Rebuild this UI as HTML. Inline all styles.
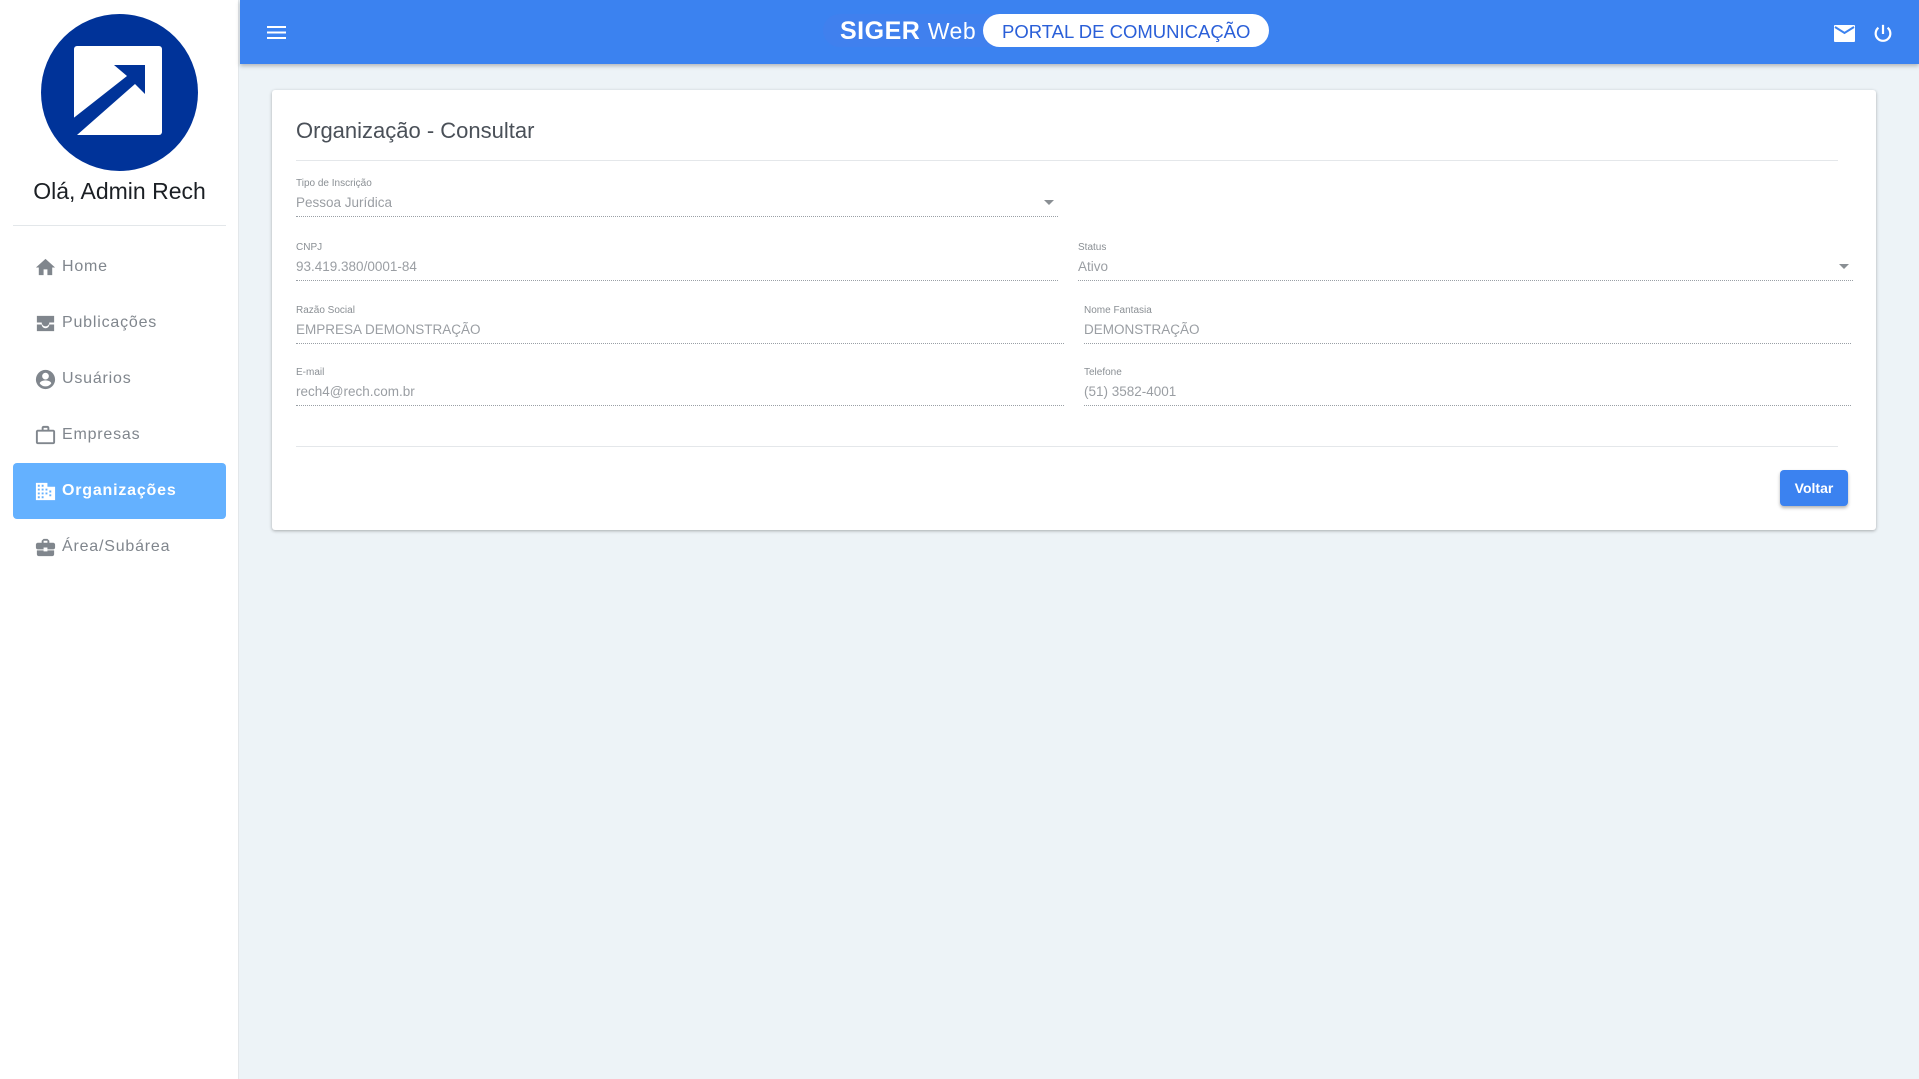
<!DOCTYPE html>
<html><head><meta charset="utf-8">
<style>
*{box-sizing:border-box;margin:0;padding:0}
body{width:1919px;height:1079px;overflow:hidden;background:#edf3f7;font-family:"Liberation Sans",sans-serif;position:relative}
.side{position:absolute;left:0;top:0;width:239px;height:1079px;background:#fff;border-right:1px solid #e3e7ea}
.hdr{position:absolute;left:240px;top:0;right:0;height:64px;background:#3b82f0;box-shadow:0 2px 4px rgba(0,0,0,.25)}
.nav{position:absolute;left:34px;height:22px;display:flex;align-items:center;font-size:16px;color:#80868d;letter-spacing:.8px}
.nav svg{width:23px;height:23px;margin-right:5px;fill:#80868d}
.active{position:absolute;left:13px;top:463px;width:213px;height:56px;background:#64b1ff;border-radius:4px}
.card{position:absolute;left:272px;top:90px;width:1604px;height:440px;background:#fff;border-radius:3px;box-shadow:0 1px 3px rgba(0,0,0,.3)}
.f{position:absolute}
.f .l{position:absolute;top:1px;font-size:10px;color:#8a8f94}
.f .v{position:absolute;top:18px;font-size:13.5px;color:#9a9ea3}
.f .u{position:absolute;top:39px;left:0;right:0;border-top:1px dotted #9aa0a6}
.arrow{position:absolute;right:4px;top:23px;width:0;height:0;border-left:5px solid transparent;border-right:5px solid transparent;border-top:5px solid #8a8f94}
</style></head><body>
<div class="side">
  <svg style="position:absolute;left:41px;top:14px" width="157" height="157" viewBox="0 0 157 157">
    <circle cx="78.5" cy="78.5" r="78.5" fill="#003399"/>
    <rect x="33" y="32" width="88" height="89" rx="3" fill="#fff"/>
    <polygon points="30,106 86,62 73,51 104,51 104,80 94,70 36,121 30,121" fill="#003399"/>
  </svg>
  <div style="position:absolute;left:0;width:239px;top:178px;text-align:center;font-size:23px;color:#1b1f24">Olá, Admin Rech</div>
  <div style="position:absolute;left:13px;width:213px;top:225px;border-top:1px solid #e3e7ea"></div>
  <div class="active"></div>
  <div class="nav" style="top:256px"><svg viewBox="0 0 24 24"><path d="M10 20v-6h4v6h5v-8h3L12 3 2 12h3v8z"/></svg>Home</div>
  <div class="nav" style="top:312px"><svg viewBox="0 0 24 24"><path d="M3 4h18v7h-5a4 4 0 0 1-8 0H3zM3 13h5a4 4 0 0 0 8 0h5v7H3z"/></svg>Publicações</div>
  <div class="nav" style="top:368px"><svg viewBox="0 0 24 24"><path d="M12 2a10 10 0 1 0 0 20 10 10 0 0 0 0-20zm0 3a3.5 3.5 0 1 1 0 7 3.5 3.5 0 0 1 0-7zm0 14.2a7.2 7.2 0 0 1-6-3.2c0-2 4-3.1 6-3.1s6 1.1 6 3.1a7.2 7.2 0 0 1-6 3.2z"/></svg>Usuários</div>
  <div class="nav" style="top:424px"><svg viewBox="0 0 24 24"><path d="M14 6V4h-4v2zM4 8v11h16V8zm16-2c1.1 0 2 .9 2 2v11c0 1.1-.9 2-2 2H4c-1.1 0-2-.9-2-2V8c0-1.1.9-2 2-2h4V4c0-1.1.9-2 2-2h4c1.1 0 2 .9 2 2v2z"/></svg>Empresas</div>
  <div class="nav" style="top:480px;color:#fff;font-weight:bold"><svg viewBox="0 0 24 24" style="fill:#fff"><path d="M2 3h12v4h8v14H2zm2 2v2h2V5zm4 0v2h2V5zM4 9v2h2V9zm4 0v2h2V9zm4 0v2h2V9zM4 13v2h2v-2zm4 0v2h2v-2zm4 0v2h2v-2zM4 17v2h2v-2zm4 0v2h2v-2zm8-6v2h2v-2zm0 4v2h2v-2z"/></svg>Organizações</div>
  <div class="nav" style="top:536px"><svg viewBox="0 0 24 24"><path d="M10 16v-1H3v4c0 1.1.9 2 2 2h14c1.1 0 2-.9 2-2v-4h-7v1zm10-9h-4V5l-2-2h-4L8 5v2H4c-1.1 0-2 .9-2 2v3c0 1.1.9 2 2 2h6v-2h4v2h6c1.1 0 2-.9 2-2V9c0-1.1-.9-2-2-2zm-6 0h-4V5h4z"/></svg>Área/Subárea</div>
</div>
<div class="hdr">
  <svg style="position:absolute;left:27px;top:25px" width="19" height="15" viewBox="0 0 19 15"><rect y="1" width="19" height="2" fill="#fff"/><rect y="6.5" width="19" height="2" fill="#fff"/><rect y="12" width="19" height="2" fill="#fff"/></svg>
  <div style="position:absolute;left:583px;top:14px;width:210px;height:33px;border-radius:17px;background:#4080ee"></div>
  <div style="position:absolute;left:743px;top:14px;width:286px;height:33px;border-radius:17px;background:#fff"></div>
  <div style="position:absolute;left:600px;top:16px;font-size:25px;line-height:31px;color:#fff;font-weight:bold;letter-spacing:.5px">SIGER <span style="font-weight:normal;font-size:23px">Web</span></div>
  <div style="position:absolute;left:762px;top:16px;font-size:18.5px;line-height:31px;color:#2a5fd8">PORTAL DE COMUNICAÇÃO</div>
  <svg style="position:absolute;left:1594px;top:25px" width="21" height="17" viewBox="0 0 21 17"><rect width="21" height="17" rx="1" fill="#fff"/><path d="M1 2l9.5 6L20 2" stroke="#3b82f0" stroke-width="2" fill="none"/></svg>
  <svg style="position:absolute;left:1632px;top:23px" width="22" height="22" viewBox="0 0 24 24"><path d="M12 2v10" stroke="#fff" stroke-width="2.4" fill="none"/><path d="M7 5.2a8 8 0 1 0 10 0" stroke="#fff" stroke-width="2.4" fill="none"/></svg>
</div>
<div class="card">
  <div style="position:absolute;left:24px;top:28px;font-size:22px;color:#4a5058">Organização - Consultar</div>
  <div style="position:absolute;left:24px;width:1542px;top:70px;border-top:1px solid #e4e7ea"></div>
  <div class="f" style="left:24px;top:87px;width:762px"><div class="l">Tipo de Inscrição</div><div class="v">Pessoa Jurídica</div><div class="arrow"></div><div class="u"></div></div>
  <div class="f" style="left:24px;top:151px;width:762px"><div class="l">CNPJ</div><div class="v">93.419.380/0001-84</div><div class="u"></div></div>
  <div class="f" style="left:806px;top:151px;width:775px"><div class="l">Status</div><div class="v">Ativo</div><div class="arrow"></div><div class="u"></div></div>
  <div class="f" style="left:24px;top:214px;width:768px"><div class="l">Razão Social</div><div class="v">EMPRESA DEMONSTRAÇÃO</div><div class="u"></div></div>
  <div class="f" style="left:812px;top:214px;width:767px"><div class="l">Nome Fantasia</div><div class="v">DEMONSTRAÇÃO</div><div class="u"></div></div>
  <div class="f" style="left:24px;top:276px;width:768px"><div class="l">E-mail</div><div class="v">rech4@rech.com.br</div><div class="u"></div></div>
  <div class="f" style="left:812px;top:276px;width:767px"><div class="l">Telefone</div><div class="v">(51) 3582-4001</div><div class="u"></div></div>
  <div style="position:absolute;left:24px;width:1542px;top:356px;border-top:1px solid #e4e7ea"></div>
  <div style="position:absolute;left:1508px;top:380px;width:68px;height:36px;border-radius:4px;background:#3b82f0;color:#fff;font-weight:bold;font-size:14px;line-height:36px;text-align:center;box-shadow:0 2px 3px rgba(0,0,0,.3)">Voltar</div>
</div>
</body></html>
